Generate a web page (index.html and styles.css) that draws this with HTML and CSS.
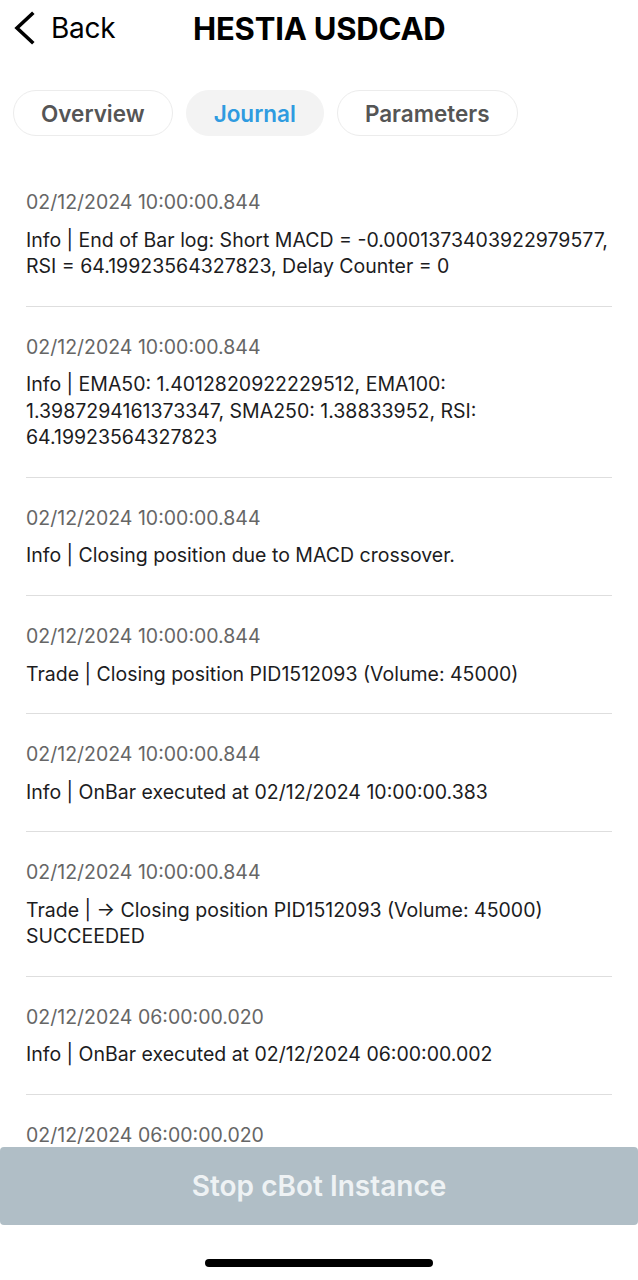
FILE: index.html
```html
<!DOCTYPE html>
<html lang="en">
<head>
    <meta charset="UTF-8">
    <meta name="viewport" content="width=device-width, initial-scale=1.0">
    <title>HESTIA USDCAD - Journal</title>
    <link rel="stylesheet" href="styles.css">
</head>
<body>
    <div class="screen">
        <!-- Top bar -->
        <header class="top-bar">
            <a class="back" href="#">
                <svg class="back-icon" width="24" height="34" viewBox="0 0 24 34">
                    <path d="M19 3 L4 17 L19 31" fill="none" stroke="#000" stroke-width="3.6" stroke-linecap="square" stroke-linejoin="miter"/>
                </svg>
                <span>Back</span>
            </a>
            <h1 class="title">HESTIA USDCAD</h1>
        </header>

        <!-- Tabs -->
        <nav class="tabs">
            <button class="tab">Overview</button>
            <button class="tab active">Journal</button>
            <button class="tab">Parameters</button>
        </nav>

        <!-- Journal list -->
        <div class="journal">
            <div class="entry">
                <div class="time">02/12/2024 10:00:00.844</div>
                <div class="msg">Info | End of Bar log: Short MACD = -0.0001373403922979577, RSI = 64.19923564327823, Delay Counter = 0</div>
            </div>
            <div class="entry">
                <div class="time">02/12/2024 10:00:00.844</div>
                <div class="msg">Info | EMA50: 1.4012820922229512, EMA100: 1.3987294161373347, SMA250: 1.38833952, RSI: 64.19923564327823</div>
            </div>
            <div class="entry">
                <div class="time">02/12/2024 10:00:00.844</div>
                <div class="msg">Info | Closing position due to MACD crossover.</div>
            </div>
            <div class="entry">
                <div class="time">02/12/2024 10:00:00.844</div>
                <div class="msg">Trade | Closing position PID1512093 (Volume: 45000)</div>
            </div>
            <div class="entry">
                <div class="time">02/12/2024 10:00:00.844</div>
                <div class="msg">Info | OnBar executed at 02/12/2024 10:00:00.383</div>
            </div>
            <div class="entry">
                <div class="time">02/12/2024 10:00:00.844</div>
                <div class="msg">Trade | → Closing position PID1512093 (Volume: 45000) SUCCEEDED</div>
            </div>
            <div class="entry">
                <div class="time">02/12/2024 06:00:00.020</div>
                <div class="msg">Info | OnBar executed at 02/12/2024 06:00:00.002</div>
            </div>
            <div class="entry">
                <div class="time">02/12/2024 06:00:00.020</div>
            </div>
        </div>

        <!-- Bottom action -->
        <footer class="bottom">
            <button class="stop-btn">Stop cBot Instance</button>
            <div class="home-bar"></div>
        </footer>
    </div>
</body>
</html>
```

FILE: styles.css
```css
* {
    margin: 0;
    padding: 0;
    box-sizing: border-box;
    font-family: 'Inter', 'Roboto', sans-serif;
}

body {
    background: #ffffff;
    color: #1c1c1e;
}

.screen {
    width: 638px;
    height: 1280px;
    display: flex;
    flex-direction: column;
    overflow: hidden;
}

/* Top bar */
.top-bar {
    height: 56px;
    display: flex;
    align-items: center;
    padding: 0 0 0 13px;
}

.back {
    display: flex;
    align-items: center;
    gap: 14px;
    color: #000;
    text-decoration: none;
    font-size: 28px;
    letter-spacing: -0.3px;
    width: 180px;
}

.back-icon {
    display: block;
}

.title {
    font-size: 31px;
    font-weight: 700;
    color: #000;
    letter-spacing: -0.2px;
}

/* Tabs */
.tabs {
    display: flex;
    gap: 13px;
    padding: 34px 13px 0;
}

.tab {
    height: 46px;
    padding: 0 27px;
    border: 1px solid #ececec;
    border-radius: 23px;
    background: #fff;
    font-size: 22.5px;
    font-weight: 600;
    color: #555;
}

.tab.active {
    background: #f3f3f3;
    border-color: #f3f3f3;
    color: #2f9be0;
}

/* Journal */
.journal {
    flex: 1;
    overflow: hidden;
    padding: 26px 26px 0;
}

.entry {
    padding: 27px 0 26px;
    border-bottom: 1px solid #dedede;
}

.time {
    font-size: 19.5px;
    line-height: 26px;
    color: #666;
    margin-bottom: 11.5px;
}

.msg {
    font-size: 19.5px;
    line-height: 26.6px;
    color: #1c1c1e;
}

/* Bottom */
.bottom {
    display: flex;
    flex-direction: column;
    align-items: center;
}

.stop-btn {
    width: 100%;
    height: 78px;
    border: none;
    border-radius: 4px;
    background: #b0bec6;
    color: #eef2f4;
    font-size: 28px;
    font-weight: 600;
}

.home-bar {
    width: 228px;
    height: 8px;
    border-radius: 4px;
    background: #000;
    margin: 34px 0 13px;
}
```
